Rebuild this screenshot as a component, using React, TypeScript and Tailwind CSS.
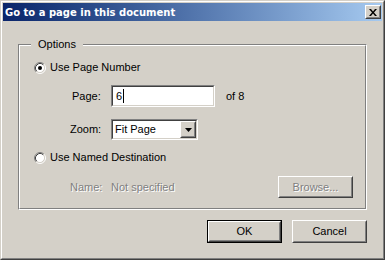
const Raised = ({ children, className = "" }: { children?: React.ReactNode; className?: string }) => (
  <div className={`border border-t-white border-l-white border-r-[#404040] border-b-[#404040] ${className}`}>
    <div className="h-full w-full border border-t-[#d4d0c8] border-l-[#d4d0c8] border-r-[#808080] border-b-[#808080] flex items-center justify-center">
      {children}
    </div>
  </div>
);

const Sunken = ({ children, className = "" }: { children?: React.ReactNode; className?: string }) => (
  <div className={`border border-t-[#808080] border-l-[#808080] border-r-white border-b-white ${className}`}>
    <div className="h-full w-full border border-t-[#404040] border-l-[#404040] border-r-[#d4d0c8] border-b-[#d4d0c8] bg-white flex items-center">
      {children}
    </div>
  </div>
);

const Radio = ({ checked }: { checked?: boolean }) => (
  <svg width="12" height="12" viewBox="0 0 12 12" className="shrink-0">
    <circle cx="6" cy="6" r="4.5" fill="#fff" />
    <path d="M2.11 9.89 A5.5 5.5 0 0 1 9.89 2.11" stroke="#808080" fill="none" />
    <path d="M9.89 2.11 A5.5 5.5 0 0 1 2.11 9.89" stroke="#fff" fill="none" />
    <path d="M2.82 9.18 A4.5 4.5 0 0 1 9.18 2.82" stroke="#404040" fill="none" />
    <path d="M9.18 2.82 A4.5 4.5 0 0 1 2.82 9.18" stroke="#d4d0c8" fill="none" />
    {checked && <circle cx="6" cy="6" r="2" fill="#000" />}
  </svg>
);

const disabledText = "text-[#808080] [text-shadow:1px_1px_0_#fff]";

export default function App() {
  return (
    <div className="w-[385px] h-[260px] bg-[#d4d0c8] font-['Liberation_Sans',Arial,sans-serif] text-[11px] text-black leading-[13px] select-none">
      <div className="h-full w-full border border-t-[#d4d0c8] border-l-[#d4d0c8] border-r-[#404040] border-b-[#404040]">
        <div className="h-full w-full border border-t-white border-l-white border-r-[#808080] border-b-[#808080] p-px flex flex-col">
          {/* title bar */}
          <div className="h-[18px] bg-linear-to-r from-[#0a246a] to-[#a6caf0] flex items-center pl-[2px] pr-[1px]">
            <span className="text-white font-bold text-[10px] flex-1 font-['DejaVu_Sans',sans-serif]">Go to a page in this document</span>
            <Raised className="w-[16px] h-[14px] bg-[#d4d0c8]">
              <svg width="8" height="7" viewBox="0 0 8 7">
                <path d="M0 0h2l2 2.5 2-2.5h2l-3 3.5 3 3.5h-2l-2-2.5-2 2.5h-2l3-3.5z" fill="#000" />
              </svg>
            </Raised>
          </div>

          {/* body */}
          <div className="flex-1 flex flex-col pl-[15px] pr-[14px] pt-[23px]">
            <div className="relative w-[349px] h-[166px] border border-t-[#808080] border-l-[#808080] border-r-white border-b-white">
              <span className="absolute -top-[7px] left-[12px] bg-[#d4d0c8] px-[7px]">Options</span>
              <div className="h-full w-full border border-t-white border-l-white border-r-[#808080] border-b-[#808080] pt-[15px] pl-[14px] pr-[12px] flex flex-col">
                <div className="h-[13px] flex items-center gap-[4px]">
                  <Radio checked />
                  <span>Use Page Number</span>
                </div>

                <div className="mt-[11px] h-[22px] flex items-center">
                  <span className="w-[77px] pl-[38px]">Page:</span>
                  <Sunken className="w-[104px] h-[22px]">
                    <span className="pl-[3px]">6</span>
                    <span className="ml-px w-px h-[14px] bg-black" />
                  </Sunken>
                  <span className="ml-[11px]">of 8</span>
                </div>

                <div className="mt-[12px] h-[21px] flex items-center">
                  <span className="w-[77px] pl-[36px]">Zoom:</span>
                  <Sunken className="w-[87px] h-[21px]">
                    <span className="flex-1 pl-[2px]">Fit Page</span>
                    <Raised className="w-[16px] h-[17px] bg-[#d4d0c8]">
                      <svg width="7" height="4" viewBox="0 0 7 4">
                        <path d="M0 0h7l-3.5 4z" fill="#000" />
                      </svg>
                    </Raised>
                  </Sunken>
                </div>

                <div className="mt-[11px] h-[13px] flex items-center gap-[4px]">
                  <Radio />
                  <span>Use Named Destination</span>
                </div>

                <div className="mt-[12px] h-[22px] flex items-center">
                  <span className={`w-[77px] pl-[36px] ${disabledText}`}>Name:</span>
                  <span className={`flex-1 ${disabledText}`}>Not specified</span>
                  <Raised className="w-[75px] h-[22px]">
                    <span className={disabledText}>Browse...</span>
                  </Raised>
                </div>
              </div>
            </div>

            <div className="mt-[10px] flex justify-end gap-[10px] pr-px">
              <div className="w-[75px] h-[23px] border border-black">
                <Raised className="h-full w-full">
                  <span>OK</span>
                </Raised>
              </div>
              <Raised className="w-[75px] h-[23px]">
                <span>Cancel</span>
              </Raised>
            </div>
          </div>
        </div>
      </div>
    </div>
  );
}
